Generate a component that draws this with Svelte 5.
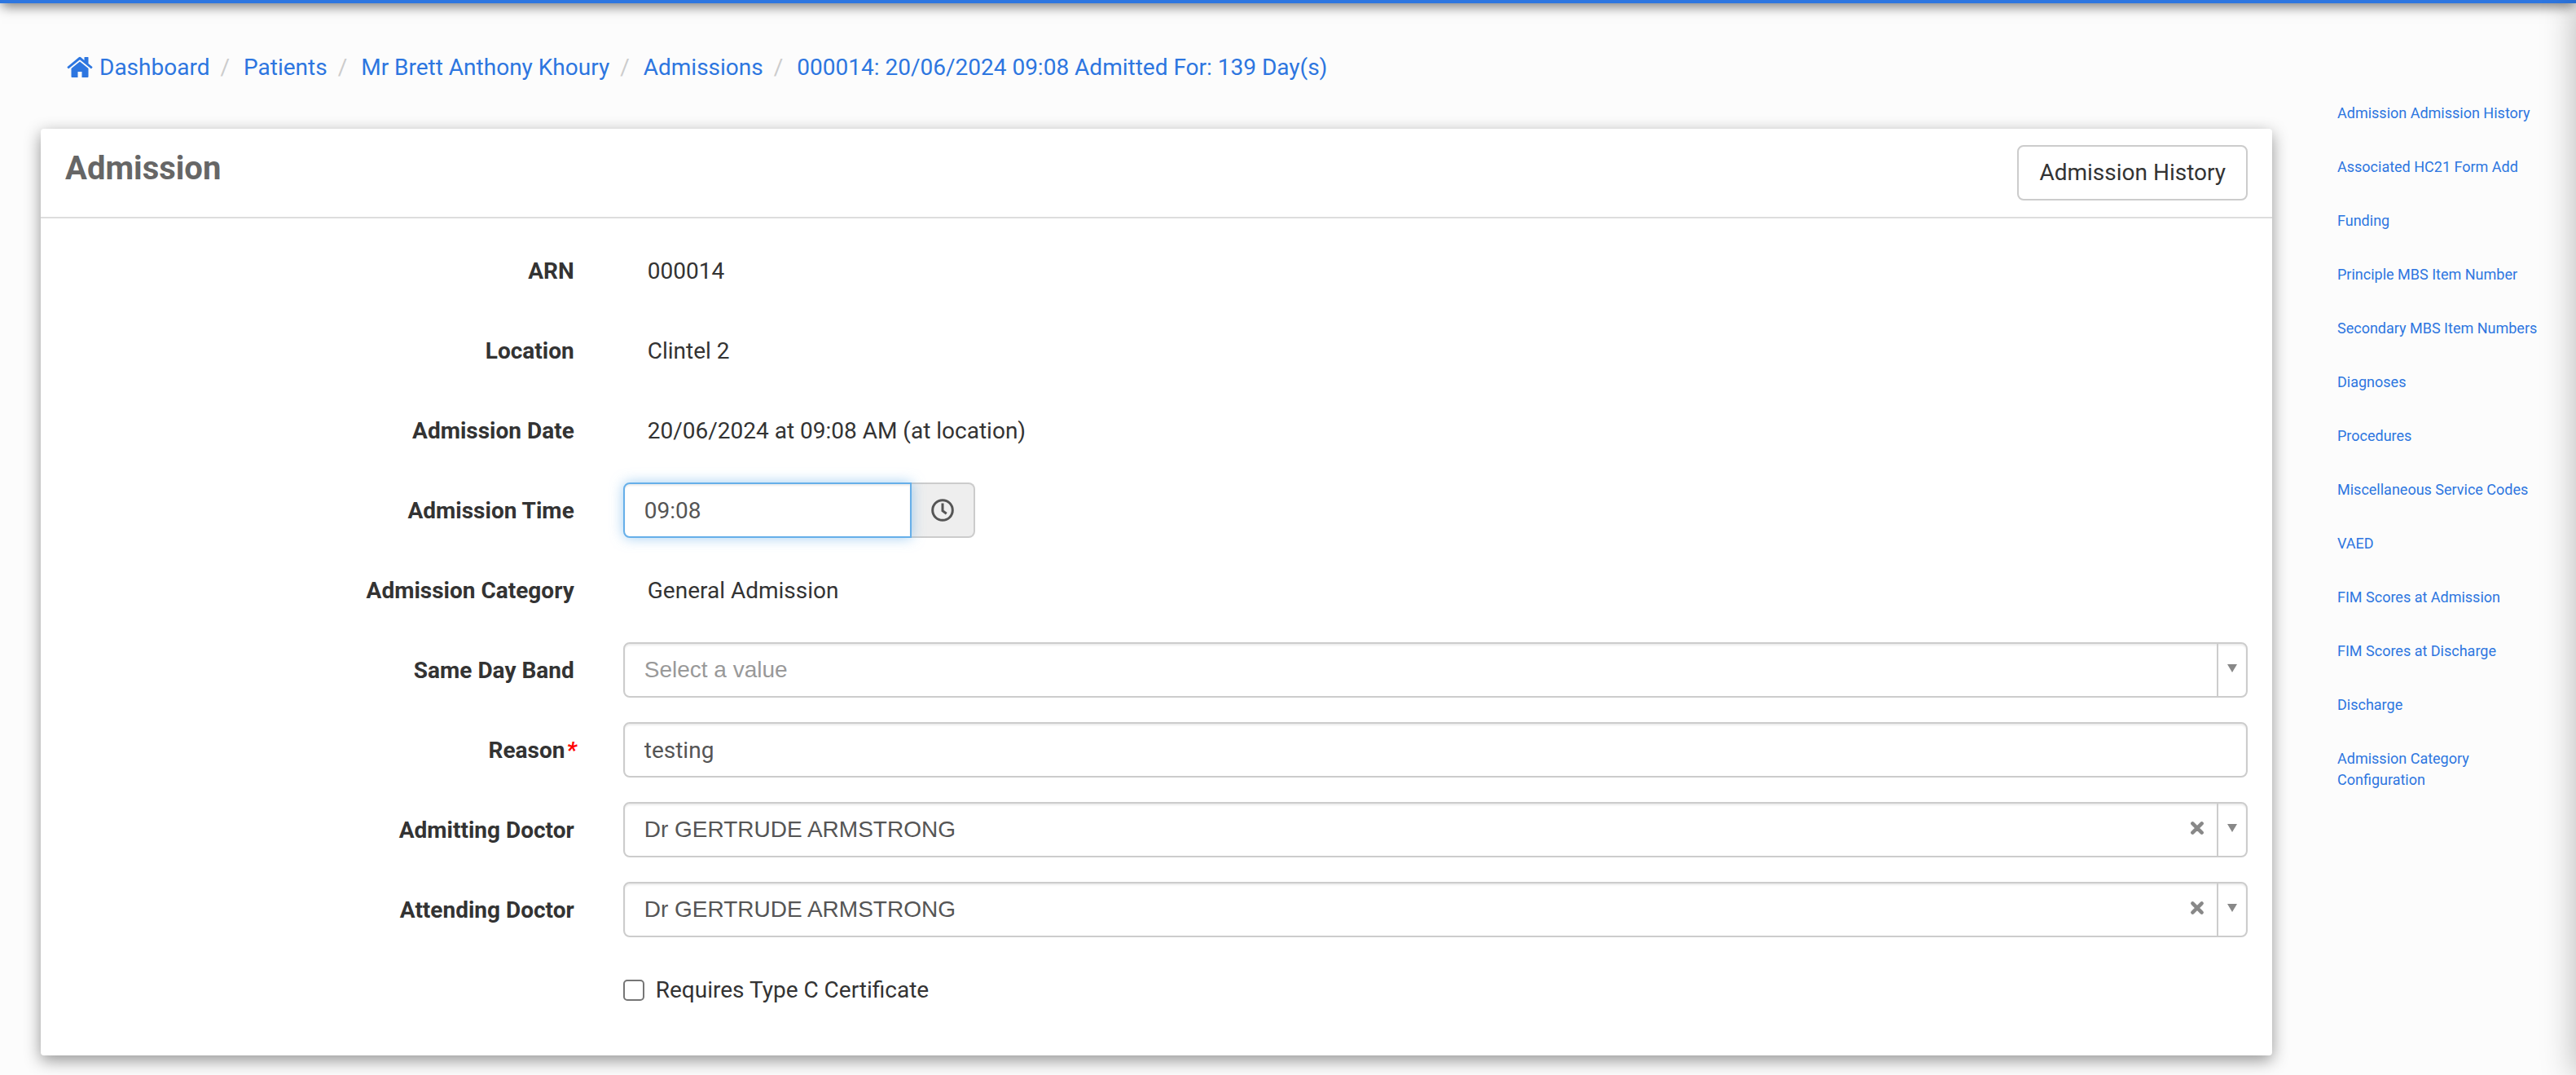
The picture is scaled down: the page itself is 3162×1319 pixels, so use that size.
<script>
  const crumbs = [
    "Patients",
    "Mr Brett Anthony Khoury",
    "Admissions",
    "000014: 20/06/2024 09:08 Admitted For: 139 Day(s)",
  ];

  const sections = [
    "Admission Admission History",
    "Associated HC21 Form Add",
    "Funding",
    "Principle MBS Item Number",
    "Secondary MBS Item Numbers",
    "Diagnoses",
    "Procedures",
    "Miscellaneous Service Codes",
    "VAED",
    "FIM Scores at Admission",
    "FIM Scores at Discharge",
    "Discharge",
    "Admission Category Configuration",
  ];

  let time = "09:08";
  let band = "";
  let reason = "testing";
  let certificate = false;
  let doctors = [
    { id: "admitting", label: "Admitting Doctor", value: "Dr GERTRUDE ARMSTRONG" },
    { id: "attending", label: "Attending Doctor", value: "Dr GERTRUDE ARMSTRONG" },
  ];
</script>

<div class="page">
  <header class="topbar"></header>

  <div class="layout">
    <main>
      <nav aria-label="Breadcrumb">
        <ol class="breadcrumb">
          <li>
            <a href="#dashboard">
              <svg class="home" viewBox="0 0 32 28" aria-hidden="true">
                <path d="M16 0.8 Q16.600 0.8 17.200 1.300 L21.500 5 V1.500 Q21.500 1 22 1 H26 Q26.500 1 26.500 1.500 V9 L31.300 13 Q31.700 13.400 31.300 13.900 L30.300 15 Q29.900 15.400 29.400 15 L16 4.200 L2.600 15 Q2.100 15.400 1.700 15 L0.700 13.900 Q0.300 13.400 0.700 13 L14.800 1.300 Q15.400 0.8 16 0.8 Z" />
                <path d="M16 6.500 L26.500 15 V25 Q26.500 26 25.500 26 H18.500 V19 H13.500 V26 H6.500 Q5.500 26 5.500 25 V15 Z" />
              </svg>
              Dashboard
            </a>
          </li>
          {#each crumbs as crumb}
            <li><a href="#crumb">{crumb}</a></li>
          {/each}
        </ol>
      </nav>

      <section class="card">
        <div class="card-header">
          <h2>Admission</h2>
          <button type="button" class="btn">Admission History</button>
        </div>

        <form class="card-body">
          <div class="row">
            <span class="label">ARN</span>
            <div class="field text">000014</div>
          </div>
          <div class="row">
            <span class="label">Location</span>
            <div class="field text">Clintel 2</div>
          </div>
          <div class="row">
            <span class="label">Admission Date</span>
            <div class="field text">20/06/2024 at 09:08 AM (at location)</div>
          </div>
          <div class="row">
            <label class="label" for="time">Admission Time</label>
            <div class="field">
              <div class="input-group">
                <input class="control active" id="time" type="text" bind:value={time} />
                <button type="button" class="addon" aria-label="Pick a time">
                  <svg class="clock" viewBox="0 0 28 28" aria-hidden="true">
                    <circle cx="14" cy="14" r="12.300" />
                    <path d="M14 5.500 V14.800 L18.800 18.300" />
                  </svg>
                </button>
              </div>
            </div>
          </div>
          <div class="row">
            <span class="label">Admission Category</span>
            <div class="field text">General Admission</div>
          </div>
          <div class="row">
            <label class="label" for="band">Same Day Band</label>
            <div class="field">
              <div class="control picker">
                <select id="band" class:placeholder={!band} bind:value={band}>
                  <option value="">Select a value</option>
                </select>
                <span class="arrow"></span>
              </div>
            </div>
          </div>
          <div class="row">
            <label class="label required" for="reason">Reason</label>
            <div class="field">
              <input class="control" id="reason" type="text" bind:value={reason} />
            </div>
          </div>
          {#each doctors as doctor}
            <div class="row">
              <label class="label" for={doctor.id}>{doctor.label}</label>
              <div class="field">
                <div class="control picker">
                  <select id={doctor.id} bind:value={doctor.value}>
                    <option value=""></option>
                    <option>Dr GERTRUDE ARMSTRONG</option>
                  </select>
                  {#if doctor.value}
                    <button
                      type="button"
                      class="clear"
                      aria-label="Clear {doctor.label}"
                      on:click={() => (doctor.value = "")}
                    >
                      <svg viewBox="0 0 16 16" aria-hidden="true">
                        <path d="M3 3 L13 13 M13 3 L3 13" />
                      </svg>
                    </button>
                  {/if}
                  <span class="arrow"></span>
                </div>
              </div>
            </div>
          {/each}
          <div class="row">
            <div class="field offset">
              <label class="checkbox">
                <input type="checkbox" bind:checked={certificate} />
                Requires Type C Certificate
              </label>
            </div>
          </div>
        </form>
      </section>
    </main>

    <aside>
      <ul>
        {#each sections as section}
          <li><a href="#section">{section}</a></li>
        {/each}
      </ul>
    </aside>
  </div>

  <div class="drawer"></div>
</div>

<style>
  :global(body) {
    background: #fcfcfc;
  }

  .page,
  .page * {
    box-sizing: border-box;
  }
  .page {
    position: relative;
    display: flow-root;
    min-height: 100vh;
    overflow: hidden;
    font-family: Roboto, sans-serif;
    font-size: 28px;
    line-height: 40px;
    color: #333;
  }
  a {
    color: #2d76e0;
    text-decoration: none;
  }

  /* only the lower edge of the bar shows */
  .topbar {
    height: 60px;
    margin-top: -56px;
    background: #2d76e0;
    box-shadow: 0 6px 14px -2px rgba(0, 0, 0, 0.52);
  }
  .drawer {
    position: absolute;
    top: 0;
    bottom: 0;
    left: 100%;
    width: 400px;
    box-shadow: 0 0 40px rgba(0, 0, 0, 0.28);
  }

  .layout {
    display: flex;
  }
  main {
    flex: 1;
    min-width: 0;
    padding: 59px 0 25px 50px;
  }

  .breadcrumb {
    display: flex;
    margin: 0 0 55px;
    padding: 0 32px;
    list-style: none;
  }
  .breadcrumb li {
    display: flex;
  }
  .breadcrumb a {
    display: flex;
    align-items: center;
    gap: 8px;
  }
  .breadcrumb li + li::before {
    content: "/";
    padding: 0 17px 0 13px;
    color: #ccc;
  }
  .home {
    width: 32px;
    height: 28px;
    fill: #2d76e0;
  }

  .card {
    background: #fff;
    border-radius: 4px;
    box-shadow: 0 6px 20px rgba(0, 0, 0, 0.42);
  }
  .card-header {
    display: flex;
    justify-content: space-between;
    padding: 20px 30px;
    border-bottom: 2px solid #ddd;
  }
  h2 {
    margin: 9px 0;
    font-size: 40px;
    line-height: 40px;
    color: #666;
  }
  .btn {
    padding: 12px 25px;
    border: 2px solid #ccc;
    border-radius: 8px;
    background: #fff;
    font: inherit;
    color: #333;
  }

  .card-body {
    padding: 30px 0;
  }
  .row {
    display: flex;
    margin-bottom: 30px;
  }
  .label {
    width: 25%;
    padding: 15px 30px 0;
    text-align: right;
    font-weight: 700;
  }
  .required::after {
    content: "*";
    margin: 0 -3px 0 2px;
    font-style: italic;
    color: red;
  }
  .field {
    width: 75%;
    padding: 0 30px;
  }
  .text {
    min-height: 68px;
    padding: 15px 60px 0;
  }
  .offset {
    margin-left: 25%;
  }

  .control {
    width: 100%;
    height: 68px;
    padding: 12px 24px;
    border: 2px solid #ccc;
    border-radius: 8px;
    background: #fff;
    box-shadow: inset 0 2px 2px rgba(0, 0, 0, 0.075);
    font: inherit;
    color: #555;
  }
  .active {
    position: relative;
    border-color: #66afe9;
    outline: 0;
    box-shadow:
      inset 0 2px 2px rgba(0, 0, 0, 0.075),
      0 0 16px rgba(102, 175, 233, 0.6);
  }
  .input-group {
    display: flex;
    width: 432px;
  }
  .input-group .control {
    flex: 1;
    min-width: 0;
    border-radius: 8px 0 0 8px;
  }
  .addon {
    display: flex;
    align-items: center;
    padding: 0 24px;
    border: 2px solid #ccc;
    border-left: 0;
    border-radius: 0 8px 8px 0;
    background: #eee;
  }
  .clock {
    width: 28px;
    height: 28px;
    fill: none;
    stroke: #555;
    stroke-width: 3;
  }

  .picker {
    display: flex;
    align-items: stretch;
    padding: 0;
  }
  .picker select {
    flex: 1;
    min-width: 0;
    padding: 0 24px 2px;
    border: 0;
    background: none;
    appearance: none;
    font: 28px "Liberation Sans", Arial, sans-serif;
    color: #555;
  }
  .picker .placeholder {
    color: #999;
  }
  .clear {
    display: flex;
    align-items: center;
    padding: 0 15px 4px;
    border: 0;
    background: none;
  }
  .clear svg {
    width: 18px;
    height: 18px;
    stroke: #888;
    stroke-width: 4;
    stroke-linecap: round;
  }
  .arrow {
    display: flex;
    justify-content: center;
    width: 36px;
    padding-top: 25px;
    border-left: 2px solid #ccc;
  }
  .arrow::before {
    content: "";
    width: 0;
    height: 0;
    border: 6px solid transparent;
    border-top: 10px solid #888;
    border-bottom: 0;
  }

  .checkbox {
    display: flex;
    align-items: center;
    width: fit-content;
    padding-top: 15px;
  }
  .checkbox input {
    width: 26px;
    height: 26px;
    margin: 0 14px 0 0;
    appearance: none;
    border: 2px solid #767676;
    border-radius: 5px;
    background: #fff;
  }

  aside {
    width: 373px;
    padding: 102px 30px 0 80px;
  }
  aside ul {
    margin: 0;
    padding: 0;
    list-style: none;
    font-size: 18px;
    line-height: 26px;
  }
  aside a {
    display: block;
    padding: 20px 0;
  }
</style>
